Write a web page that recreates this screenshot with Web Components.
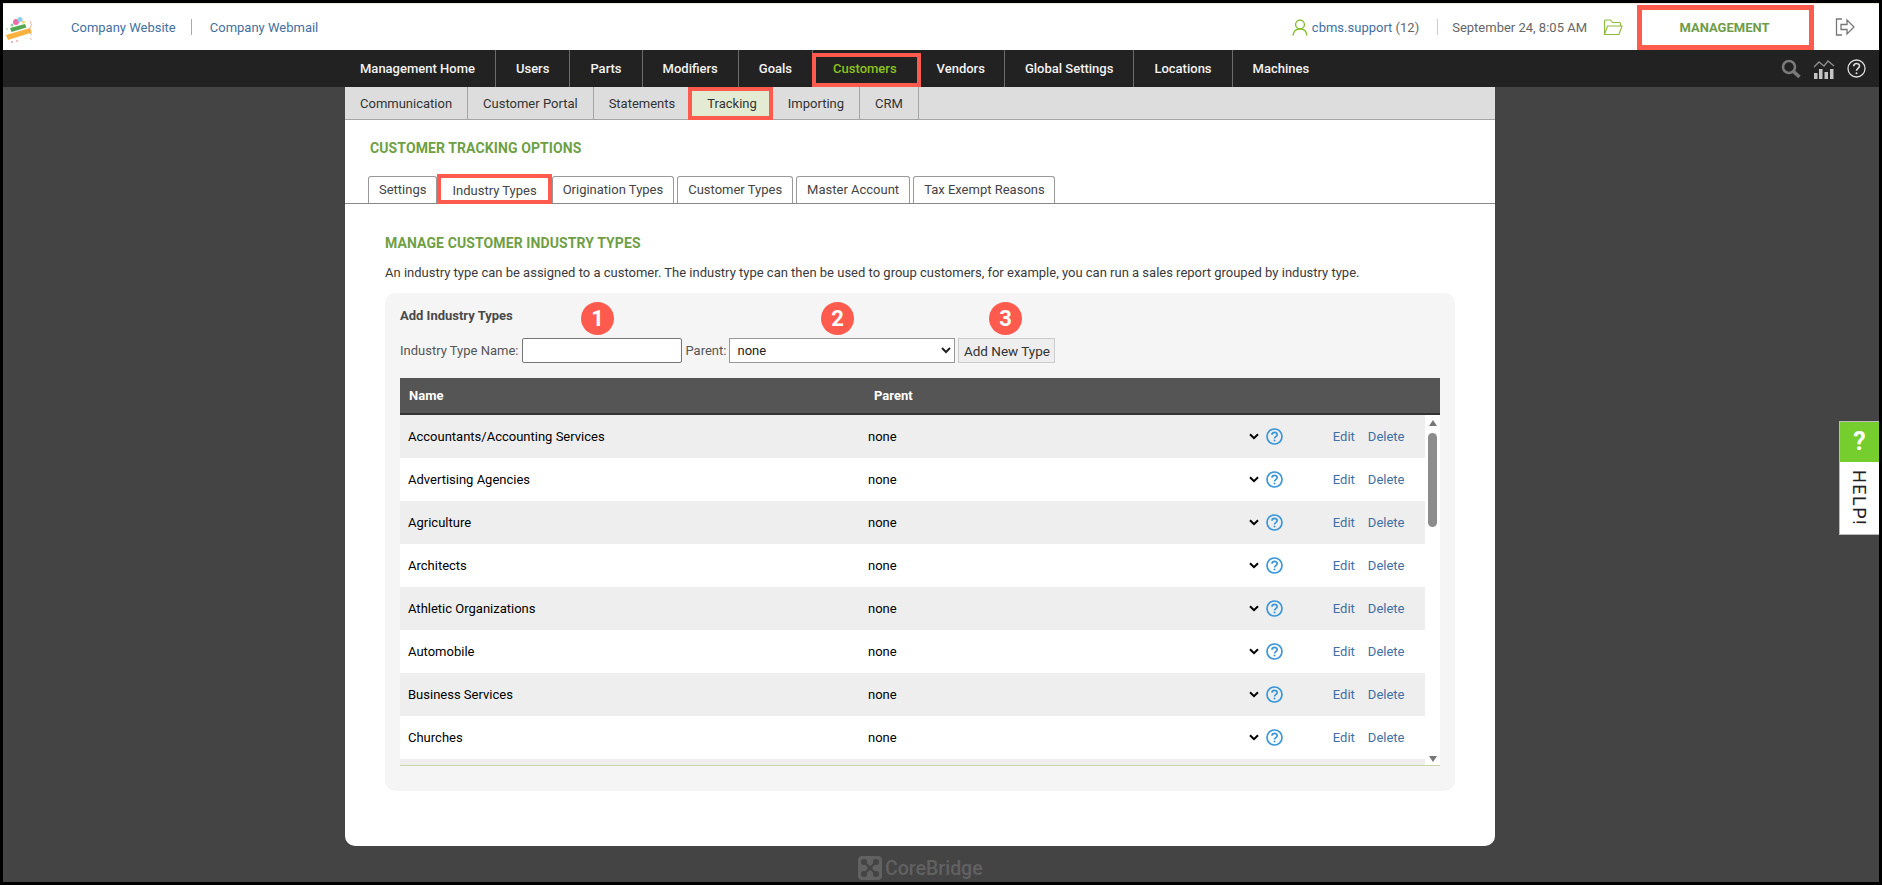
<!DOCTYPE html>
<html lang="en">
<head>
<meta charset="utf-8">
<title>Customer Tracking Options</title>
<style>
  html, body { margin: 0; height: 885px; overflow: hidden; background: #000; }
  body { font-family: Roboto, "Liberation Sans", sans-serif; }
</style>
</head>
<body>
<cb-app>
  <cb-topbar slot="top"></cb-topbar>
  <cb-mainnav slot="top"></cb-mainnav>

  <cb-subnav></cb-subnav>
  <cb-section-title>CUSTOMER TRACKING OPTIONS</cb-section-title>
  <cb-tabs></cb-tabs>

  <cb-industry-panel>
    <cb-row name="Accountants/Accounting Services" parent="none"></cb-row>
    <cb-row name="Advertising Agencies" parent="none"></cb-row>
    <cb-row name="Agriculture" parent="none"></cb-row>
    <cb-row name="Architects" parent="none"></cb-row>
    <cb-row name="Athletic Organizations" parent="none"></cb-row>
    <cb-row name="Automobile" parent="none"></cb-row>
    <cb-row name="Business Services" parent="none"></cb-row>
    <cb-row name="Churches" parent="none"></cb-row>
    <cb-row></cb-row>
  </cb-industry-panel>

  <cb-help slot="overlay"></cb-help>
</cb-app>

<script>
class CbApp extends HTMLElement {
  constructor() {
    super();
    this.attachShadow({mode: 'open'}).innerHTML = `
      <style>
        :host {
          display: flex;
          flex-direction: column;
          position: relative;
          height: 879px;
          margin: 3px;
          background: #444;
          overflow: hidden;
        }
        .card {
          box-sizing: border-box;
          width: 1150px;
          height: 759px;
          margin-left: 342px;
          background: #fff;
          border-radius: 0 0 10px 10px;
        }
        .foot {
          display: flex;
          align-items: center;
          gap: 3px;
          height: 24px;
          margin: 10px 0 0 855px;
          color: #616161;
          font: 500 19.500px Roboto, sans-serif;
        }
      </style>
      <slot name="top"></slot>
      <div class="card"><slot></slot></div>
      <div class="foot">
        <svg width="24" height="24" viewBox="0 0 24 24">
          <rect width="24" height="24" rx="4" fill="#616161"/>
          <path d="M6 6l12 12M18 6L6 18" stroke="#444" stroke-width="2"/>
          <g fill="#444"><circle cx="6" cy="6" r="3"/><circle cx="18" cy="6" r="3"/><circle cx="6" cy="18" r="3"/><circle cx="18" cy="18" r="3"/><circle cx="12" cy="12" r="2.5"/></g>
        </svg>
        <span>CoreBridge</span>
      </div>
      <slot name="overlay"></slot>
    `;
  }
}

class CbTopbar extends HTMLElement {
  constructor() {
    super();
    this.attachShadow({mode: 'open'}).innerHTML = `
      <style>
        :host {
          display: flex;
          box-sizing: border-box;
          align-items: center;
          height: 47px;
          padding-right: 24px;
          background: #fff;
          border-top: 1px solid #eeeadb;
          font-size: 13px;
          color: #666;
        }
        a { color: #44709f; text-decoration: none; }
        .logo { margin: 6px 0 0 1px; flex: none; }
        .links { display: flex; align-items: center; margin-left: 36px; }
        .sep { width: 1px; height: 16px; background: #aaa; }
        .links .sep { margin: 0 18px 0 15px; }
        .right { display: flex; align-items: center; margin-left: auto; height: 100%; }
        .user { margin-left: 4px; }
        .right .sep { margin: 0 14px 0 18px; background: #ccc; }
        .folder { margin-left: 16px; }
        .mgmt {
          box-sizing: border-box;
          display: flex;
          align-items: center;
          justify-content: center;
          align-self: flex-end;
          width: 177px;
          height: 45px;
          margin-left: 14px;
          border: 5px solid #fe5a4e;
          color: #6f9c48;
          font-weight: 700;
          padding: 0 2px 1px 0;
        }
        .exit { margin-left: 21px; }
      </style>
      <svg class="logo" width="31" height="29" viewBox="0 0 31 29">
        <circle cx="12" cy="6" r="3" fill="#ef6cab"/>
        <circle cx="16" cy="3.500" r="2.500" fill="#8ad0ee"/>
        <circle cx="19.500" cy="6" r="1.500" fill="#f5d668"/>
        <circle cx="8" cy="9" r="1.500" fill="#8fd0a0"/>
        <path d="M6 12l15-4 1.500 3.500-15 4.500z" fill="#55a84f"/>
        <path d="M2 19l24-7 2 4.500-24 7.500z" fill="#f8b240"/>
        <path d="M26 5q3 4 0 7t2 7" stroke="#e09a7c" stroke-width=".8" fill="none"/>
        <circle cx="8" cy="26" r=".8" fill="#b58"/><circle cx="13" cy="25" r=".8" fill="#c77"/>
        <circle cx="3" cy="13" r=".7" fill="#8b6"/><circle cx="27" cy="23" r=".7" fill="#da8"/>
      </svg>
      <div class="links">
        <a>Company Website</a><span class="sep"></span><a>Company Webmail</a>
      </div>
      <div class="right">
        <svg width="16" height="17" viewBox="0 0 16 17" fill="none" stroke="#7dbb1f" stroke-width="1.300">
          <circle cx="8" cy="5.500" r="4.400"/><path d="M1 16.500c.5-4.500 3-6.600 7-6.600s6.500 2.100 7 6.600"/>
        </svg>
        <span class="user"><a>cbms.support</a> (12)</span>
        <span class="sep"></span>
        <span>September 24, 8:05 AM</span>
        <svg class="folder" width="20" height="17" viewBox="0 0 20 17" fill="none" stroke="#8dbb3e" stroke-width="1.100">
          <path d="M1.500 15.500V2q0-1 1-1h5l2 2.500h7q1 0 1 1V7M1.500 15.500h14.500L19 7H4.500z"/>
        </svg>
        <div class="mgmt">MANAGEMENT</div>
        <svg class="exit" width="20" height="18" viewBox="0 0 20 18" fill="none" stroke="#777" stroke-width="1.300">
          <path d="M7 1H1.500v16H7M6 6.500h6V2l7 7-7 7v-4.500H6z"/>
        </svg>
      </div>
    `;
  }
}

class CbMainnav extends HTMLElement {
  constructor() {
    super();
    const items = ['Management Home', 'Users', 'Parts', 'Modifiers', 'Goals', 'Customers', 'Vendors', 'Global Settings', 'Locations', 'Machines'];
    this.attachShadow({mode: 'open'}).innerHTML = `
      <style>
        :host {
          display: flex;
          align-items: stretch;
          height: 37px;
          padding-left: 337px;
          padding-right: 13px;
          background: #222;
          color: #f2f2f2;
          font-size: 13px;
          font-weight: 500;
        }
        .item {
          position: relative;
          display: flex;
          align-items: center;
          padding: 0 20px;
          border-right: 1px solid #6c6c6c;
        }
        .item:first-child { padding-right: 18px; }
        .item:nth-child(8) { padding-right: 19px; }
        .item.last { border-right: 0; }
        .item.on { color: #8bc220; border-right: 0; }
        .item.on::after {
          content: '';
          position: absolute;
          inset: 3px -4px 0 -1px;
          border: 4.500px solid #fe5a4e;
        }
        .icons { display: flex; align-items: center; gap: 12px; margin-left: auto; }
      </style>
      ${items.map(t => `<div class="item${t == 'Customers' ? ' on' : ''}${t == 'Machines' ? ' last' : ''}">${t}</div>`).join('')}
      <div class="icons">
        <svg width="20" height="19" viewBox="0 0 20 19" fill="none" stroke="#7a7a7a">
          <circle cx="8" cy="8" r="6" stroke-width="2.500"/><path d="M12.500 12.500l6 5.500" stroke-width="3.500"/>
        </svg>
        <svg width="22" height="20" viewBox="0 0 22 20">
          <path d="M1 8l5-5 5 4 4-5 6 5" fill="none" stroke="#8a8a8a" stroke-width="1.500"/>
          <path d="M1 14h3.500v6H1zM6 10h3.500v10H6zM11.500 13H15v7h-3.500zM17 10h3.500v10H17z" fill="#c4c4c4"/>
        </svg>
        <svg width="19" height="19" viewBox="0 0 19 19" fill="none" stroke="#ddd" stroke-width="1.300">
          <circle cx="9.500" cy="9.500" r="8.500"/>
          <path d="M6.700 7.300c0-3.600 5.800-3.600 5.800-.2 0 2.300-3 2.300-3 4.700" stroke-width="1.600"/>
          <circle cx="9.500" cy="14.300" r="1" fill="#ddd" stroke="none"/>
        </svg>
      </div>
    `;
  }
}

class CbSubnav extends HTMLElement {
  constructor() {
    super();
    const items = ['Communication', 'Customer Portal', 'Statements', 'Tracking', 'Importing', 'CRM'];
    this.attachShadow({mode: 'open'}).innerHTML = `
      <style>
        :host {
          display: flex;
          height: 33px;
          box-sizing: border-box;
          background: #ddd;
          border-bottom: 1px solid #a5a5a5;
          color: #333;
          font-size: 13px;
        }
        .item {
          position: relative;
          display: flex;
          align-items: center;
          padding: 1px 15px 0;
          border-right: 1px solid #a5a5a5;
        }
        .item.on { background: #e3ebd3; padding: 1px 16px 0 19px; border-right: 0; }
        .item.on::after {
          content: '';
          position: absolute;
          inset: 0 0 -1px 0;
          border: 4.500px solid #fe5a4e;
        }
        .item.before-on { border-right: 0; padding-right: 13px; }
      </style>
      ${items.map(t => `<div class="item${t == 'Tracking' ? ' on' : ''}${t == 'Statements' ? ' before-on' : ''}">${t}</div>`).join('')}
    `;
  }
}

class CbSectionTitle extends HTMLElement {
  constructor() {
    super();
    this.attachShadow({mode: 'open'}).innerHTML = `
      <style>
        :host {
          display: block;
          padding: 19px 25px 0;
          height: 37px;
          color: #6f9f45;
          font-size: 14px;
          font-weight: 700;
          line-height: 18px;
          letter-spacing: .1px;
        }
      </style>
      <slot></slot>
    `;
  }
}

class CbTabs extends HTMLElement {
  constructor() {
    super();
    const items = ['Settings', 'Industry Types', 'Origination Types', 'Customer Types', 'Master Account', 'Tax Exempt Reasons'];
    this.attachShadow({mode: 'open'}).innerHTML = `
      <style>
        :host {
          display: flex;
          gap: 3px;
          box-sizing: border-box;
          height: 28px;
          padding-left: 23px;
          border-bottom: 1px solid #888;
          font-size: 13px;
          color: #444;
        }
        .tab {
          box-sizing: border-box;
          display: flex;
          align-items: center;
          height: 27px;
          padding: 0 10px 2px;
          background: #fff;
          border: 1px solid #999;
          border-bottom: 0;
          border-radius: 3px 3px 0 0;
        }
        .tab:last-child { padding-right: 9px; }
        .tab.on {
          position: relative;
          margin: 0 0 0 -3px;
          padding: 1px 15px 0;
          border: 0;
        }
        .tab.on::after {
          content: '';
          position: absolute;
          inset: -2px 0 -1px 0;
          border: 4.500px solid #fe5a4e;
        }
        .tab.on + .tab { margin-left: -3px; }
      </style>
      ${items.map(t => `<div class="tab${t == 'Industry Types' ? ' on' : ''}">${t}</div>`).join('')}
    `;
  }
}

class CbIndustryPanel extends HTMLElement {
  constructor() {
    super();
    this.attachShadow({mode: 'open'}).innerHTML = `
      <style>
        :host { display: block; padding: 30px 40px 0; font-size: 13px; color: #3a3a3a; }
        h2 { margin: 0; color: #6f9f45; font-size: 14px; font-weight: 700; line-height: 18px; letter-spacing: .1px; }
        p { margin: 12px 0 0; line-height: 18px; }
        .panel {
          position: relative;
          box-sizing: border-box;
          height: 498px;
          margin-top: 11px;
          padding: 13px 15px 0;
          background: #f5f5f5;
          border-radius: 10px;
        }
        h3 { margin: 1px 0 0; font-size: 13px; font-weight: 700; color: #4a4a4a; line-height: 18px; }
        form { display: flex; align-items: center; gap: 3px; height: 25px; margin-top: 13px; color: #555; font-size: 13px; }
        input, select, button { box-sizing: border-box; height: 25px; margin: 0; font: 13px Roboto, sans-serif; }
        input { width: 160px; margin-left: 1px; background: #fff; border: 1px solid #767676; border-radius: 2px; }
        select { width: 226px; padding-left: 3px; background: #fff; border: 1px solid #999; border-radius: 0; color: #222; }
        button { width: 97px; padding: 0; background: #eee; border: 1px solid #ccc; color: #333; font-size: 13.500px; }
        .head {
          display: flex;
          align-items: center;
          box-sizing: border-box;
          height: 37px;
          margin-top: 15px;
          padding: 0 9px;
          background: #555;
          border-bottom: 2px solid #333;
          color: #fff;
          font-size: 13px;
          font-weight: 700;
        }
        .head span:first-child { width: 465px; }
        .body { display: flex; height: 351px; background: #fff; border-bottom: 1px solid #c5d8a8; box-sizing: border-box; }
        .rows { flex: 1; height: 350px; overflow: hidden; }
        .bar { display: flex; flex-direction: column; align-items: center; width: 15px; padding-top: 5px; box-sizing: border-box; }
        .thumb { width: 9px; height: 94px; margin-top: 7px; background: #8c8c8c; border-radius: 5px; }
        .arrow { width: 0; height: 0; border: 4px solid transparent; border-top: 0; border-bottom: 6px solid #777; }
        .arrow.down { margin-top: auto; margin-bottom: 3px; border-bottom: 0; border-top: 6px solid #777; }
        .num {
          position: absolute;
          top: 9px;
          width: 33px;
          height: 33px;
          border-radius: 50%;
          background: #fe5a4e;
          color: #fff;
          font: 700 22px/33px Roboto, sans-serif;
          text-align: center;
        }
      </style>
      <h2>MANAGE CUSTOMER INDUSTRY TYPES</h2>
      <p>An industry type can be assigned to a customer. The industry type can then be used to group customers, for example, you can run a sales report grouped by industry type.</p>
      <div class="panel">
        <h3>Add Industry Types</h3>
        <span class="num" style="left:196px">1</span>
        <span class="num" style="left:436px">2</span>
        <span class="num" style="left:604px">3</span>
        <form>
          <label for="n">Industry Type Name:</label>
          <input id="n" type="text">
          <label for="p">Parent:</label>
          <select id="p"><option>none</option></select>
          <button type="button">Add New Type</button>
        </form>
        <div class="head"><span>Name</span><span>Parent</span></div>
        <div class="body">
          <div class="rows"><slot></slot></div>
          <div class="bar"><i class="arrow"></i><i class="thumb"></i><i class="arrow down"></i></div>
        </div>
      </div>
    `;
  }
}

class CbRow extends HTMLElement {
  constructor() {
    super();
    this.attachShadow({mode: 'open'});
  }

  connectedCallback() {
    const name = this.getAttribute('name');
    const tools = !name ? '' : `
      <span class="name">${name}</span>
      <span class="parent">${this.getAttribute('parent')}</span>
      <svg width="10" height="7" viewBox="0 0 10 7"><path d="M1 1.200l4 4 4-4" fill="none" stroke="#000" stroke-width="2"/></svg>
      <svg class="q" width="17" height="17" viewBox="0 0 17 17" fill="none" stroke="#3b97d9" stroke-width="1.700">
        <circle cx="8.500" cy="8.500" r="7.500"/>
        <path d="M6 6.800c0-3.100 5.200-3.100 5.200-.2 0 2-2.700 2-2.700 3.900"/>
        <circle cx="8.500" cy="12.600" r="1" fill="#3b97d9" stroke="none"/>
      </svg>
      <a class="edit">Edit</a><a class="del">Delete</a>`;
    this.shadowRoot.innerHTML = `
      <style>
        :host {
          display: flex;
          align-items: center;
          box-sizing: border-box;
          height: 43px;
          padding: 0 20.500px 0 8px;
          background: #fff;
          color: #000;
          font-size: 13px;
        }
        :host(:nth-child(odd)) { background: #eee; }
        .name { width: 460px; }
        .parent { flex: 1; }
        .q { margin: 0 0 1px 7px; }
        a { color: #3f6fa3; }
        .edit { margin-left: 50px; }
        .del { margin-left: 13px; }
      </style>
      ${tools}
    `;
  }
}

class CbHelp extends HTMLElement {
  constructor() {
    super();
    this.attachShadow({mode: 'open'}).innerHTML = `
      <style>
        :host {
          position: absolute;
          right: 0;
          top: 418px;
          box-sizing: border-box;
          width: 40px;
          height: 114px;
          background: #fff;
          border: 1px solid #bbb;
          border-right: 0;
          font-family: Roboto, sans-serif;
        }
        .q {
          height: 40px;
          background: #75ce2d;
          color: #fff;
          font: 700 25px/40px Roboto, sans-serif;
          text-align: center;
        }
        .t {
          display: flex;
          justify-content: flex-start;
          align-items: center;
          box-sizing: border-box;
          padding-top: 8px;
          writing-mode: vertical-rl;
          height: 70px;
          width: 100%;
          color: #222;
          font-size: 18px;
          letter-spacing: 1.500px;
        }
      </style>
      <div class="q">?</div>
      <div class="t">HELP!</div>
    `;
  }
}

customElements.define('cb-app', CbApp);
customElements.define('cb-topbar', CbTopbar);
customElements.define('cb-mainnav', CbMainnav);
customElements.define('cb-subnav', CbSubnav);
customElements.define('cb-section-title', CbSectionTitle);
customElements.define('cb-tabs', CbTabs);
customElements.define('cb-industry-panel', CbIndustryPanel);
customElements.define('cb-row', CbRow);
customElements.define('cb-help', CbHelp);
</script>
</body>
</html>
